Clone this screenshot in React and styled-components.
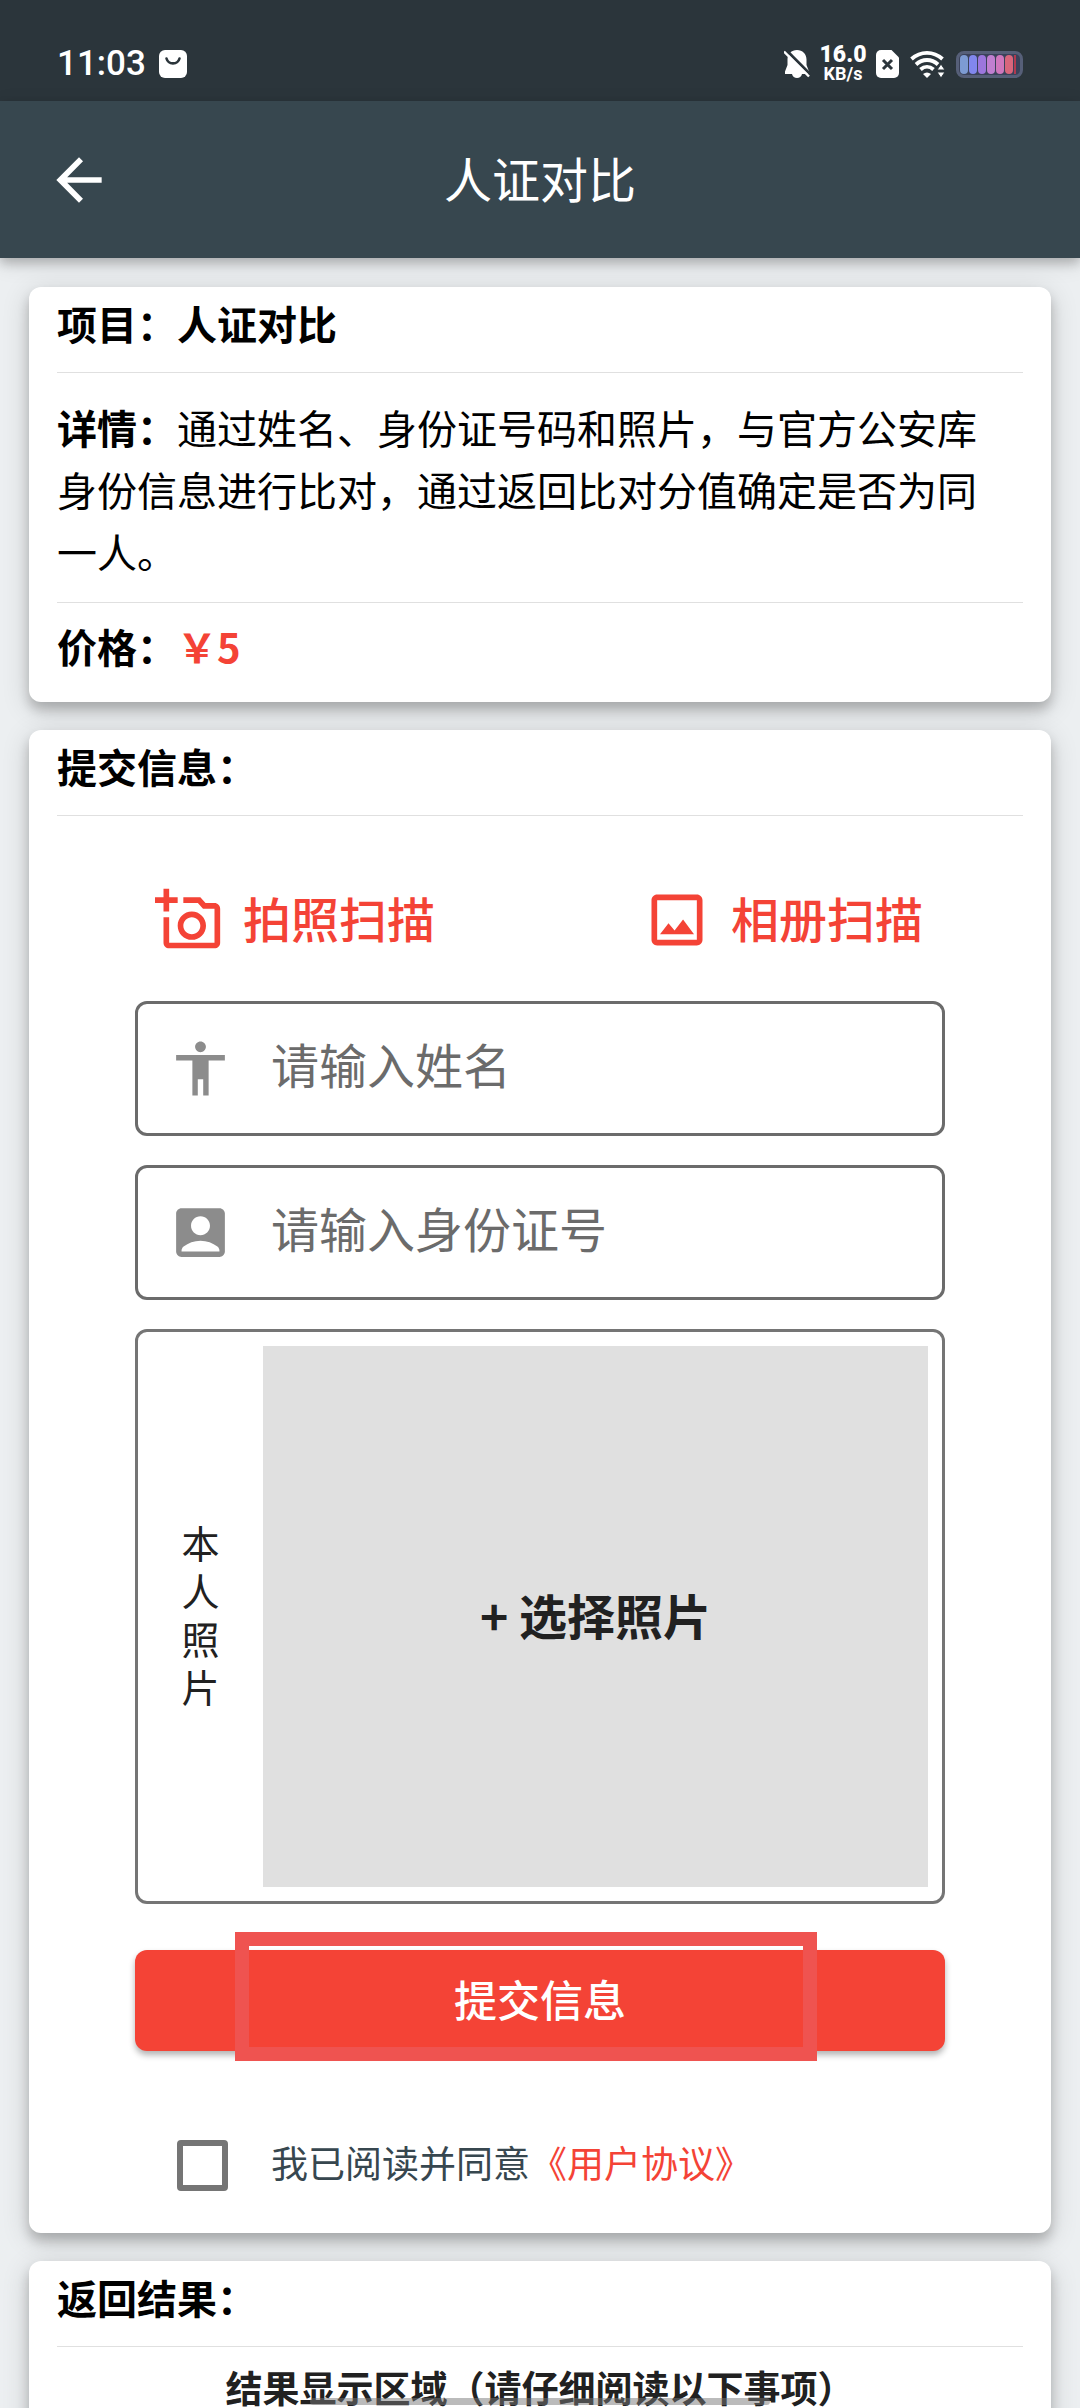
import { useState } from 'react'
import styled, { createGlobalStyle } from 'styled-components'
import {
    MdArrowBack,
    MdOutlineAddAPhoto,
    MdOutlineImage,
    MdAccessibility,
    MdAccountBox,
} from 'react-icons/md'

const fields = [
    { id: 'name', icon: <MdAccessibility />, placeholder: '请输入姓名' },
    { id: 'idNumber', icon: <MdAccountBox />, placeholder: '请输入身份证号' },
]

const batteryBars = ['#7d9bd3', '#8187ee', '#9c76dd', '#c07fd0', '#cf77bd', '#d9667c']

const StatusIcons = () => (
    <StatusGroup>
        <svg width="26" height="28" viewBox="0 0 26 28" fill="#fff">
            <path d="M13 0c5.500 0 9.500 4 9.500 9.500V15l2.500 6.500v2.500H1v-2.500L3.500 15V9.500C3.500 4 7.500 0 13 0z" />
            <path d="M8 24h10c-.6 2.600-2.500 4-5 4s-4.400-1.400-5-4z" />
            <path d="M2 0l24 24" stroke="#2b353b" strokeWidth="3" />
            <path d="M0 1.500l25 25" stroke="#fff" strokeWidth="2.400" />
        </svg>
        <Speed>
            <b>16.0</b>
            <span>KB/s</span>
        </Speed>
        <svg width="23" height="28" viewBox="0 0 23 28">
            <path fill="#fff" d="M5 0h10.500L23 7.500V23a5 5 0 0 1-5 5H5a5 5 0 0 1-5-5V5a5 5 0 0 1 5-5z" />
            <path d="M7 10l9 9M16 10l-9 9" stroke="#2b353b" strokeWidth="3" />
        </svg>
        <svg width="35" height="28" viewBox="0 0 35 28" fill="none" stroke="#fff" strokeWidth="3.800">
            <path d="M1.500 9C10.500 .8 23.500 .8 32.500 9" />
            <path d="M6 14.500c6.500-6 15.500-6 22 0" />
            <path d="M10.500 19.500c4-3.600 9-3.600 13 0" />
            <path d="M13 24c2.500-2 5.500-2 8 0l-4 4z" fill="#fff" stroke="none" />
            <path d="M31 14l4 6h-8zM31 28l4-6h-8z" fill="#fff" stroke="#2b353b" strokeWidth="1" />
        </svg>
        <Battery>
            {batteryBars.map((color) => <BatteryBar key={color} $color={color} />)}
            <BatteryBar $color="#b03a50" $thin />
        </Battery>
    </StatusGroup>
)

const App = () => {
    const [agreed, setAgreed] = useState(false)

    return (
        <>
            <GlobalStyle />
            <Screen>
                <StatusBar>
                    <StatusGroup>
                        <Clock>11:03</Clock>
                        <svg width="28" height="28" viewBox="0 0 28 28">
                            <rect width="28" height="28" rx="6" fill="#fff" />
                            <path d="M7.500 8.500c1.800 6.500 11.200 6.500 13 0" fill="none" stroke="#2b353b" strokeWidth="2.600" strokeLinecap="round" />
                        </svg>
                    </StatusGroup>
                    <StatusIcons />
                </StatusBar>
                <AppBar>
                    <BackButton aria-label="返回"><MdArrowBack /></BackButton>
                    <h1>人证对比</h1>
                </AppBar>
                <Content>
                    <Card>
                        <CardTitle>项目：人证对比</CardTitle>
                        <Divider />
                        <Details><b>详情：</b>通过姓名、身份证号码和照片，与官方公安库身份信息进行比对，通过返回比对分值确定是否为同一人。</Details>
                        <Divider />
                        <Price>价格：<span>￥5</span></Price>
                    </Card>
                    <Card>
                        <CardTitle>提交信息：</CardTitle>
                        <Divider />
                        <Form onSubmit={(e) => e.preventDefault()}>
                            <ScanRow>
                                <ScanButton type="button"><MdOutlineAddAPhoto /><span>拍照扫描</span></ScanButton>
                                <ScanButton type="button"><MdOutlineImage /><span>相册扫描</span></ScanButton>
                            </ScanRow>
                            {fields.map(({ id, icon, placeholder }) => (
                                <Field key={id} htmlFor={id}>
                                    {icon}
                                    <input id={id} type="text" placeholder={placeholder} />
                                </Field>
                            ))}
                            <PhotoField>
                                <PhotoLabel>本人照片</PhotoLabel>
                                <PhotoPicker type="button">+ 选择照片</PhotoPicker>
                            </PhotoField>
                            <SubmitWrap>
                                <SubmitButton type="submit">提交信息</SubmitButton>
                                <Highlight />
                            </SubmitWrap>
                            <Agreement>
                                <input
                                    id="agree"
                                    type="checkbox"
                                    checked={agreed}
                                    onChange={(e) => setAgreed(e.target.checked)}
                                />
                                <span>
                                    <label htmlFor="agree">我已阅读并同意</label>
                                    <a href="#agreement">《用户协议》</a>
                                </span>
                            </Agreement>
                        </Form>
                    </Card>
                    <Card>
                        <CardTitle>返回结果：</CardTitle>
                        <Divider />
                        <ResultTitle>结果显示区域（请仔细阅读以下事项）</ResultTitle>
                    </Card>
                </Content>
                <HomeIndicator />
            </Screen>
        </>
    )
}

export default App;

const GlobalStyle = createGlobalStyle`
*{
    box-sizing:border-box;
}
body{
    margin:0;
    background:#eceff1;
    font-family:"Noto Sans CJK SC",sans-serif;
}
h1,h2,h3,p{
    margin:0;
    font-weight:700;
}
svg{
    display:block;
    flex-shrink:0;
}
button,input{
    font-family:inherit;
    margin:0;
}
button{
    border:none;
    padding:0;
    cursor:pointer;
}
`;
const Screen = styled.div`
position:relative;
display:flex;
flex-direction:column;
height:100vh;
overflow:hidden;
`;
const StatusBar = styled.div`
display:flex;
flex-shrink:0;
align-items:center;
justify-content:space-between;
height:101px;
padding:27px 57px 0;
background:#2b353b;
color:#fff;
font-family:Roboto,sans-serif;
`;
const StatusGroup = styled.div`
display:flex;
align-items:center;
gap:11px;
`;
const Clock = styled.span`
font-size:35px;
line-height:40px;
font-weight:500;
margin-right:2px;
`;
const Speed = styled.div`
display:flex;
flex-direction:column;
align-items:center;
width:44px;
font-weight:700;
b{
    font-size:23px;
    line-height:20px;
}
span{
    font-size:18px;
    line-height:18px;
}
`;
const Battery = styled.div`
display:flex;
gap:1px;
width:67px;
height:27px;
padding:1px;
border:3px solid #565f78;
border-radius:8px;
background:#3b425a;
`;
const BatteryBar = styled.i`
width:${({ $thin }) => ($thin ? 2 : 8)}px;
border-radius:${({ $thin }) => ($thin ? 0 : 4)}px;
background:${({ $color }) => $color};
`;
const AppBar = styled.header`
position:relative;
z-index:1;
display:grid;
grid-template-columns:68px 1fr 68px;
flex-shrink:0;
align-items:center;
height:157px;
padding:0 45px;
background:#37474f;
color:#fff;
box-shadow:0 5px 10px rgba(0,0,0,0.2),0 6px 20px rgba(0,0,0,0.12);
h1{
    padding-bottom:6px;
    font-size:48px;
    line-height:72px;
    font-weight:400;
    text-align:center;
}
`;
const BackButton = styled.button`
background:none;
color:inherit;
font-size:68px;
`;
const Content = styled.main`
display:flex;
flex:1;
flex-direction:column;
gap:28px;
min-height:0;
padding:29px 29px 0;
overflow:hidden;
`;
const Card = styled.section`
flex-shrink:0;
padding:5px 28px 25px;
border-radius:12px;
background:#fff;
box-shadow:0 8px 12px rgba(0,0,0,0.2),0 6px 28px rgba(0,0,0,0.16);
`;
const CardTitle = styled.h2`
font-size:40px;
line-height:62px;
`;
const Divider = styled.hr`
height:1px;
margin:18px 0 0;
border:none;
background:#e0e0e0;
`;
const Details = styled.p`
padding:23px 10px 2px 0;
font-size:40px;
line-height:62px;
font-weight:400;
`;
const Price = styled.p`
padding-top:12px;
font-size:40px;
line-height:62px;
span{
    color:#f44336;
}
`;
const Form = styled.form`
display:flex;
flex-direction:column;
gap:29px;
padding:70px 78px 0;
`;
const ScanRow = styled.div`
display:flex;
justify-content:space-between;
padding:0 22px 18px 20px;
`;
const ScanButton = styled.button`
display:flex;
align-items:center;
gap:20px;
background:none;
color:#f44336;
font-size:48px;
line-height:60px;
font-weight:500;
svg{
    width:68px;
    height:68px;
}
span{
    padding-bottom:6px;
}
`;
const Field = styled.label`
display:flex;
align-items:center;
gap:38px;
height:135px;
padding:0 30px;
border:3px solid #6b6b6b;
border-radius:12px;
color:#8c8c8c;
svg{
    width:65px;
    height:65px;
}
input{
    flex:1;
    min-width:0;
    padding:0 0 12px;
    border:none;
    outline:none;
    background:none;
    color:#212121;
    font-size:48px;
}
input::placeholder{
    color:#6b6b6b;
    opacity:1;
}
`;
const PhotoField = styled.div`
display:grid;
grid-template-columns:125px 1fr;
height:575px;
padding:14px 14px 14px 0;
border:3px solid #757575;
border-radius:12px;
`;
const PhotoLabel = styled.span`
align-self:center;
justify-self:center;
width:38px;
padding-bottom:6px;
color:#212121;
font-size:38px;
line-height:48px;
`;
const PhotoPicker = styled.button`
padding-bottom:6px;
background:#e0e0e0;
color:#212121;
font-size:48px;
font-weight:700;
`;
const SubmitWrap = styled.div`
position:relative;
margin-top:17px;
`;
const SubmitButton = styled.button`
display:block;
width:100%;
height:101px;
padding-bottom:6px;
border-radius:12px;
background:#f44336;
color:#fff;
font-size:43px;
font-weight:500;
box-shadow:0 4px 6px rgba(0,0,0,0.3);
`;
// marker frame drawn over the submit button
const Highlight = styled.div`
position:absolute;
inset:-18px 128px -10px 100px;
border:14px solid #ef5350;
pointer-events:none;
`;
const Agreement = styled.div`
display:flex;
align-items:center;
gap:43px;
margin-top:57px;
padding:0 42px 15px;
color:#37474f;
font-size:37px;
line-height:50px;
input{
    appearance:none;
    width:51px;
    height:51px;
    border:6px solid #757575;
    border-radius:4px;
}
input:checked{
    background:#f44336;
}
span{
    padding-bottom:6px;
}
a{
    color:#f44336;
    text-decoration:none;
}
`;
const ResultTitle = styled.h3`
padding-top:12px;
color:#212121;
font-size:37px;
line-height:56px;
text-align:center;
`;
const HomeIndicator = styled.div`
position:absolute;
bottom:3px;
left:50%;
width:460px;
height:7px;
margin-left:-230px;
border-radius:4px;
background:rgba(120,120,120,0.5);
`;
